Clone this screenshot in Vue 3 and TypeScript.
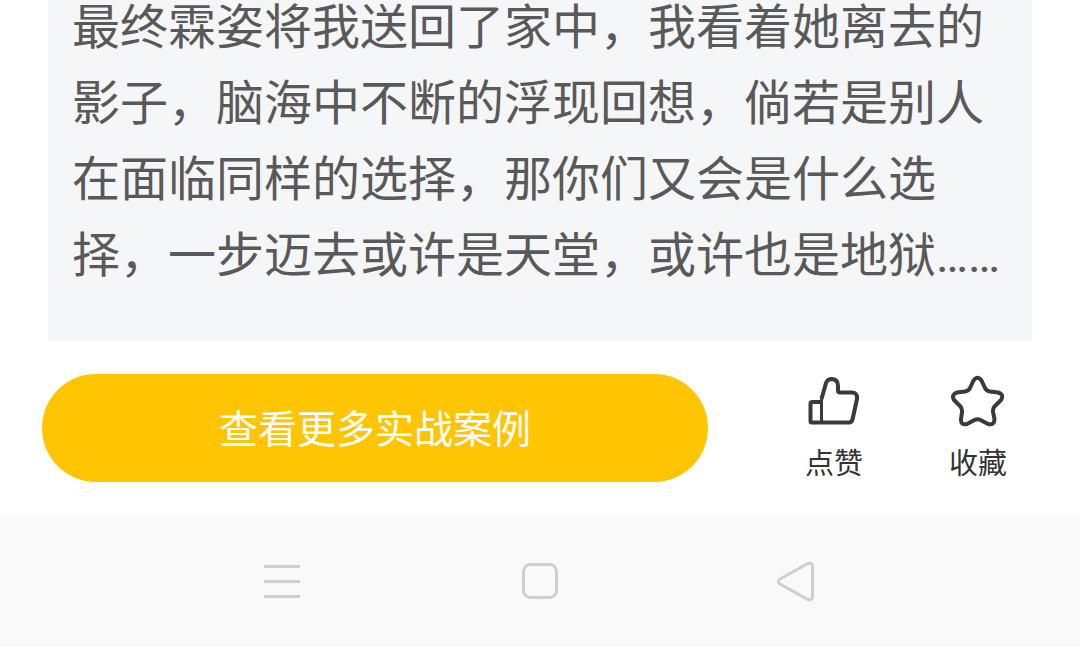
<script setup lang="ts">
import { ref } from 'vue'

const story =
  '最终霖姿将我送回了家中，我看着她离去的影子，脑海中不断的浮现回想，倘若是别人在面临同样的选择，那你们又会是什么选择，一步迈去或许是天堂，或许也是地狱……'

const liked = ref(false)
const saved = ref(false)
</script>

<template>
  <div class="screen" lang="zh-CN">
    <main class="content">
      <article class="card">
        <p class="story">{{ story }}</p>
      </article>
    </main>

    <section class="actions">
      <button class="more" type="button">查看更多实战案例</button>
      <div class="tools">
        <button class="tool" type="button" :aria-pressed="liked" @click="liked = !liked">
          <svg class="tool-icon" viewBox="0 0 54 54" aria-hidden="true">
            <path d="M14.500 25 L19 9 Q20.500 5 25 5 Q31 5.500 31 12 V16.500 Q31 18.500 33 18.500 H45 Q51 19 50 25 L45.500 45.500 Q44.500 48.500 42 48.500 H5 Q3.500 48.500 3.500 47 V30 Q3.500 28 5.500 28 H14" />
            <path class="cuff" d="M14.500 25 V48.500" />
          </svg>
          <span>点赞</span>
        </button>
        <button class="tool" type="button" :aria-pressed="saved" @click="saved = !saved">
          <svg class="tool-icon" viewBox="0 0 54 54" aria-hidden="true">
            <path d="M22.500 6.500 Q26.500 1 30.500 6.500 L34 14 Q35.500 17 39 17.500 L47 18.500 Q53.500 20.500 50 26 L43.500 32.500 Q41.500 34.500 42 38 L43.500 45 Q43.500 51.500 37 50 L29.500 46 Q26.500 44.500 23.500 46 L16 50 Q9.500 51.500 10 45 L11 38 Q11.500 34.500 9 32 L3 26 Q0 20.500 6 18.500 L14 17.500 Q17.500 17 19 14 Z" />
          </svg>
          <span>收藏</span>
        </button>
      </div>
    </section>

    <nav class="system" aria-label="系统导航">
      <button type="button" aria-label="最近任务">
        <svg viewBox="0 0 42 42" aria-hidden="true">
          <path d="M3 6.500 H39 M3 21.500 H39 M3 36.500 H39" />
        </svg>
      </button>
      <button type="button" aria-label="主屏幕">
        <svg viewBox="0 0 42 42" aria-hidden="true">
          <rect x="4.500" y="4.500" width="33" height="33" rx="7" />
        </svg>
      </button>
      <button type="button" aria-label="返回">
        <svg viewBox="0 0 42 42" aria-hidden="true">
          <path d="M3 19 L31 3.500 Q35.500 2 35.500 6.500 V36.500 Q35.500 41 31 39.500 L3 24 Q-.5 21.500 3 19 Z" />
        </svg>
      </button>
    </nav>
  </div>
</template>

<style>
body {
  margin: 0;
  background: #fff;
}
</style>

<style scoped>
.screen {
  display: flex;
  flex-direction: column;
  height: 100vh;
  overflow: hidden;
  font-family: Roboto, "Noto Sans CJK SC", sans-serif;
}

.content {
  display: flex;
  flex: 1;
  flex-direction: column;
  justify-content: flex-end;
  min-height: 0;
  padding: 0 48px;
  overflow: hidden;
}

.card {
  flex: none;
  padding: 47px 24px;
  background: #f5f6f8;
}

.story {
  margin: 0;
  color: #595959;
  font-size: 48px;
  line-height: 76px;
}

button {
  margin: 0;
  padding: 0;
  border: 0;
  background: none;
  font-family: inherit;
  cursor: pointer;
}

.actions {
  display: flex;
  align-items: flex-start;
  gap: 54px;
  padding: 33px 30px 31px 42px;
}

.more {
  flex: 1;
  height: 108px;
  padding-bottom: 4px;
  border-radius: 54px;
  background: #ffc402;
  color: #fff;
  font-size: 39px;
}

.tools {
  display: flex;
}

.tool {
  display: flex;
  flex-direction: column;
  align-items: center;
  gap: 16px;
  width: 144px;
  color: #333;
  font-size: 29px;
  line-height: 40px;
}

.tool-icon {
  width: 54px;
  height: 54px;
  fill: none;
  stroke: #3a3a3c;
  stroke-width: 4;
  stroke-linejoin: round;
}

.cuff {
  stroke-width: 3;
}

.system {
  display: flex;
  height: 132px;
  padding: 0 153px;
  background: #f9f9f9;
}

.system button {
  display: flex;
  flex: 1;
  align-items: center;
  justify-content: center;
}

.system svg {
  width: 42px;
  height: 42px;
  fill: none;
  stroke: #cfcfcf;
  stroke-width: 3;
}
</style>
